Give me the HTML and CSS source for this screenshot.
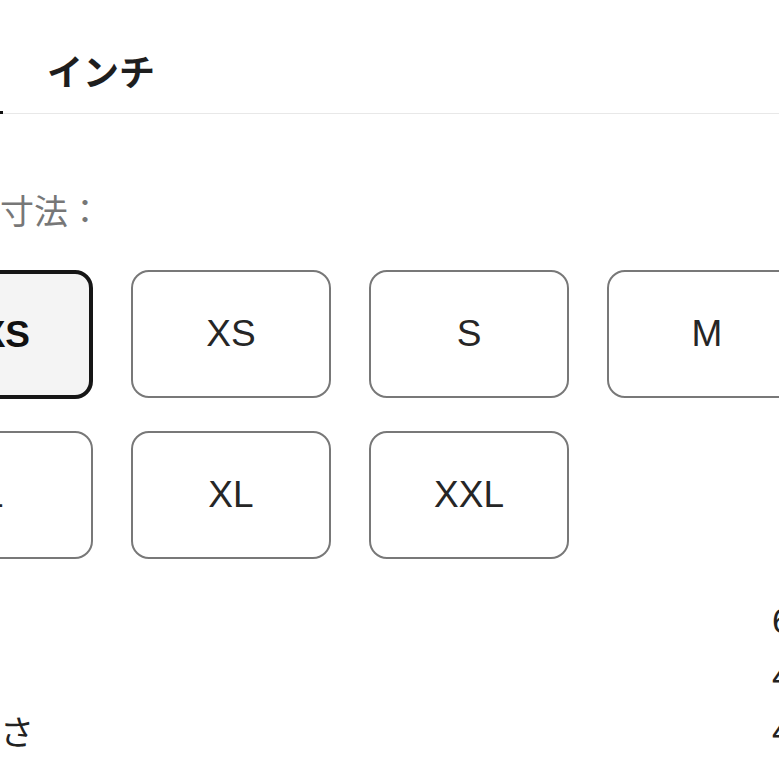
FILE: index.html
```html
<!DOCTYPE html>
<html lang="ja">
<head>
<meta charset="utf-8">
<title>サイズ</title>
<link rel="stylesheet" href="styles.css">
</head>
<body>
<div class="page">
  <div class="tabbar">
    <div class="tab tab-active">センチ</div>
    <div class="tab tab-inch">インチ</div>
  </div>
  <div class="label">寸法：</div>
  <div class="sizes">
    <div class="size size-selected">XXS</div>
    <div class="size">XS</div>
    <div class="size">S</div>
    <div class="size">M</div>
    <div class="size">L</div>
    <div class="size">XL</div>
    <div class="size">XXL</div>
  </div>
  <div class="table">
    <div class="row"><span class="key">着丈</span><span class="val">61</span></div>
    <div class="row"><span class="key">身幅</span><span class="val">48</span></div>
    <div class="row"><span class="key">袖の長さ</span><span class="val">44</span></div>
  </div>
</div>
</body>
</html>
```
FILE: styles.css
```css
html, body {
  margin: 0;
  padding: 0;
  background: #ffffff;
}
body {
  width: 779px;
  height: 779px;
  overflow: hidden;
  font-family: "Liberation Sans", "Noto Sans CJK JP", sans-serif;
  color: #222222;
}
.page {
  width: 779px;
}
.tabbar {
  display: flex;
  border-bottom: 1px solid #e8e8e8;
}
.tab {
  font-family: "Noto Sans CJK JP", sans-serif;
  font-weight: 700;
  font-size: 36px;
  line-height: 42px;
  padding: 49px 0 22px;
  color: #1e1e1e;
  white-space: nowrap;
}
.tab-active {
  width: 123px;
  margin-left: -120px;
  padding-bottom: 20px;
  border-bottom: 3px solid #111111;
  margin-bottom: -1px;
  overflow: hidden;
  text-align: left;
}
.tab-inch {
  margin-left: 44px;
}
.label {
  margin-top: 76px;
  font-family: "Noto Sans CJK JP", sans-serif;
  font-size: 34px;
  line-height: 40px;
  color: #777777;
}
.sizes {
  margin-top: 40px;
  margin-left: -107px;
  display: grid;
  grid-template-columns: repeat(4, 200px);
  column-gap: 38px;
  row-gap: 32px;
}
.size {
  box-sizing: border-box;
  height: 128px;
  border: 2px solid #787878;
  border-radius: 18px;
  display: flex;
  align-items: center;
  justify-content: center;
  font-size: 37px;
  color: #262626;
  background: #ffffff;
}
.size-selected {
  height: 129px;
  border: 4px solid #161616;
  background: #f4f4f4;
  font-weight: 700;
  color: #111111;
}
.table {
  margin-top: 34px;
  margin-left: -102px;
}
.row {
  display: grid;
  grid-template-columns: 874px auto;
  line-height: 55px;
  font-size: 35px;
}
.key {
  font-family: "Noto Sans CJK JP", sans-serif;
  font-size: 34px;
  color: #222222;
  white-space: nowrap;
}
.val {
  color: #222222;
  white-space: nowrap;
}
```
